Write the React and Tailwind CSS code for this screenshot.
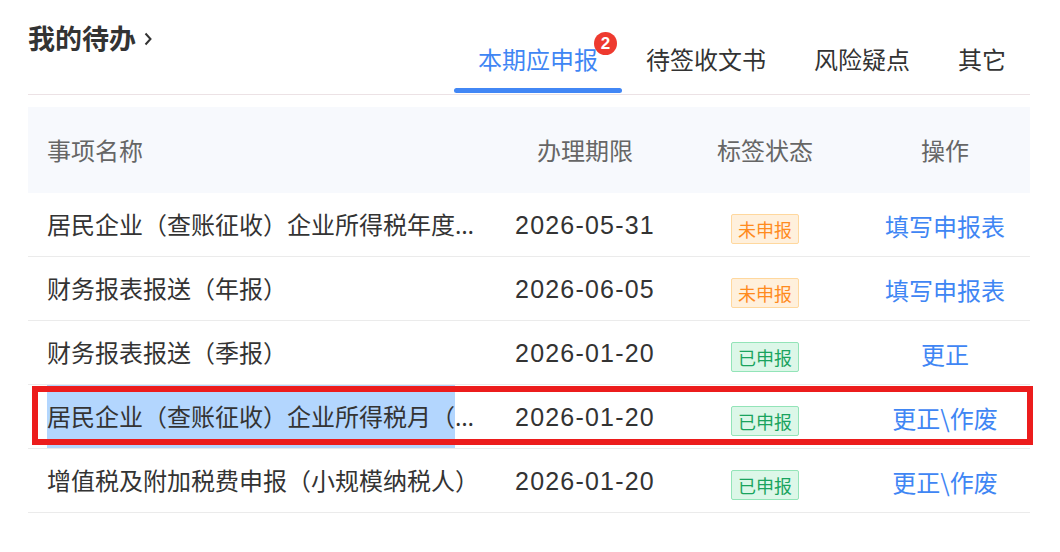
import React from "react";

const tabs = ["本期应申报", "待签收文书", "风险疑点", "其它"];

const rows = [
  {
    name: "居民企业（查账征收）企业所得税年度纳税申报",
    date: "2026-05-31",
    done: false,
    action: "填写申报表",
  },
  { name: "财务报表报送（年报）", date: "2026-06-05", done: false, action: "填写申报表" },
  { name: "财务报表报送（季报）", date: "2026-01-20", done: true, action: "更正" },
  {
    name: "居民企业（查账征收）企业所得税月（季）度申报",
    date: "2026-01-20",
    done: true,
    action: "更正\\作废",
    marked: true,
  },
  {
    name: "增值税及附加税费申报（小规模纳税人）",
    date: "2026-01-20",
    done: true,
    action: "更正\\作废",
  },
];

const cjk = "font-['Noto_Sans_CJK_SC','Noto_Sans',sans-serif]";

const Tag = ({ done }) =>
  done ? (
    <span className="inline-block h-[30px] px-[6px] leading-[28px] text-[18px] rounded-[2px] border border-[#93e4b8] bg-[#dcf7e8] text-[#1aa45e]">
      已申报
    </span>
  ) : (
    <span className="inline-block h-[30px] px-[6px] leading-[28px] text-[18px] rounded-[2px] border border-[#ffd89e] bg-[#fff0dc] text-[#ff8b1e]">
      未申报
    </span>
  );

export default function App() {
  return (
    <div className={`w-[1060px] h-[552px] bg-white pl-[28px] pr-[30px] ${cjk}`}>
      <div className="flex justify-between items-start border-b border-[#ece2e5] h-[95px]">
        <div className="flex items-center gap-[8px] pt-[25px]">
          <span className="text-[27px] leading-[26px] font-bold text-[#333]">我的待办</span>
          <svg width="8" height="14" viewBox="0 0 8 14" className="mt-[2px]">
            <path d="M1.5 1.5 L6.5 7 L1.5 12.5" fill="none" stroke="#333" strokeWidth="2" />
          </svg>
        </div>
        <div className="flex h-full">
          {tabs.map((t, i) => (
            <div key={t} className="relative flex flex-col px-6 pt-[44px]">
              <span
                className={`text-[24px] leading-[30px] ${
                  i === 0 ? "text-[#3f86f4]" : "text-[#333]"
                }`}
              >
                {t}
              </span>
              {i === 0 && (
                <>
                  <span className="absolute left-[140px] top-[32px] w-[23px] h-[23px] rounded-full bg-[#ee3a2f] text-white text-[17px] font-bold leading-[23px] text-center font-['Liberation_Sans',sans-serif]">
                    2
                  </span>
                  <span className="mt-auto mb-[1px] -mx-6 h-[5px] rounded-full bg-[#4287f5]" />
                </>
              )}
            </div>
          ))}
        </div>
      </div>

      <div className="mt-[12px]">
        <div className="grid grid-cols-[462px_190px_170px_180px] h-[86px] items-center bg-[#f7f9fd] text-[24px] text-[#666]">
          <div className="pl-[19px]">事项名称</div>
          <div className="text-center">办理期限</div>
          <div className="text-center">标签状态</div>
          <div className="text-center pl-[10px]">操作</div>
        </div>
        {rows.map((r, i) => (
          <div
            key={i}
            className="relative grid grid-cols-[462px_190px_170px_180px] h-[64px] items-center border-b border-[#ebebeb] text-[24px] text-[#333]"
          >
            <div className="pl-[19px] pr-[10px] whitespace-nowrap overflow-hidden text-ellipsis leading-[63px] font-['Noto_Sans','Noto_Sans_CJK_SC',sans-serif]">
              {r.marked ? (
                <>
                  <span className="bg-[#b3d6fe] pt-[15px] pb-[26px]">居民企业（查账征收）企业所得税月（</span>
                  季）度申报
                </>
              ) : (
                r.name
              )}
            </div>
            <div className="text-center text-[25px] tracking-[1.2px] pt-[3px] font-['Liberation_Sans',sans-serif]">
              {r.date}
            </div>
            <div className="text-center pt-[4px]">
              <Tag done={r.done} />
            </div>
            <div className="text-center pl-[10px] pt-[3px] text-[#3f86f4]">{r.action}</div>
            {r.marked && (
              <div className="absolute left-[4px] top-[1px] w-[1001px] h-[59px] border-[6px] border-[#ec1c1c] pointer-events-none" />
            )}
          </div>
        ))}
      </div>
    </div>
  );
}
